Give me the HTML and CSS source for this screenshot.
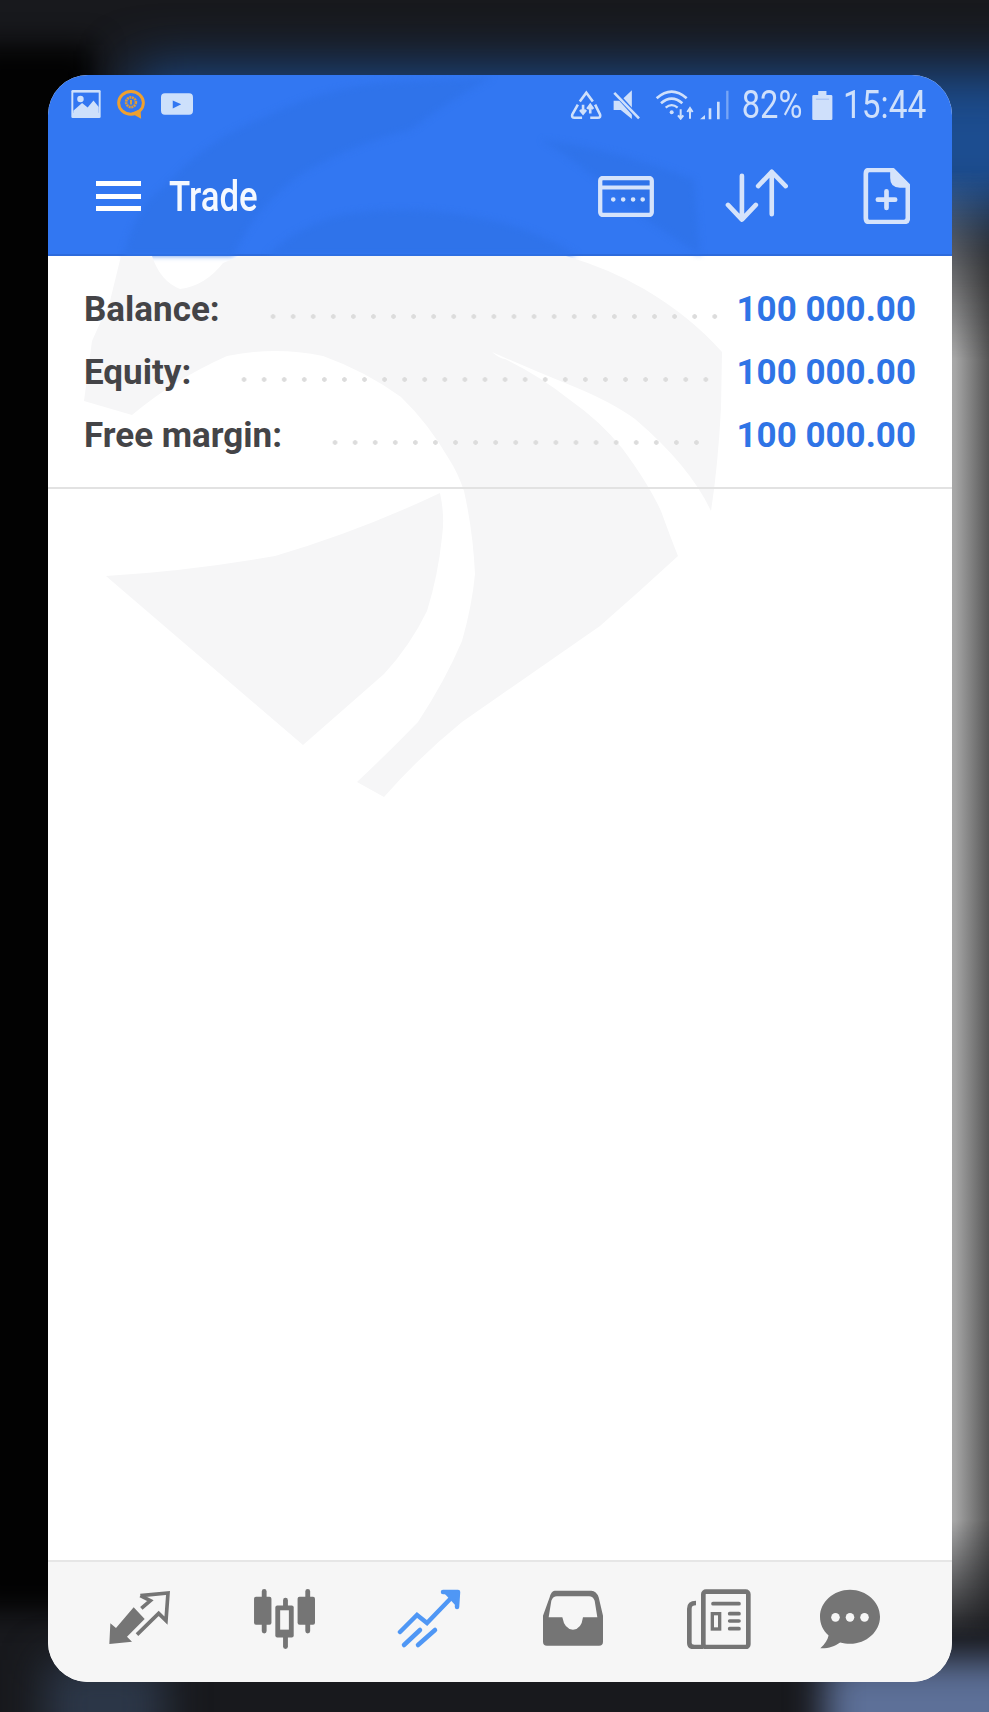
FILE: index.html
```html
<!DOCTYPE html>
<html lang="en">
<head>
    <meta charset="UTF-8">
    <meta name="viewport" content="width=device-width, initial-scale=1.0">
    <title>Trade</title>
    <link rel="stylesheet" href="styles.css">
</head>
<body>
    <!-- blurred wallpaper behind the app window -->
    <div class="backdrop">
        <div class="glow glow-black"></div>
        <div class="glow glow-top"></div>
        <div class="glow glow-side"></div>
        <div class="glow glow-corner"></div>
        <div class="glow glow-foot"></div>
    </div>

    <div class="card">
        <header class="app-header">
            <svg class="header-mark" viewBox="48 75 904 180" aria-hidden="true">
                <path d="M123 257Q136 205 164 187Q205 140 265 117Q320 90 378 83L492 77Q450 100 410 130Q350 145 303 173Q255 205 233 257Z"/>
                <path d="M265 257Q305 220 353 213Q415 205 473 217Q530 225 580 257Z"/>
                <path d="M542 140Q620 150 694 180L700 255L640 215Q590 170 542 140Z"/>
            </svg>

            <div class="status-bar">
                <div class="status-left">
                    <svg class="ico-image" viewBox="92 60 90 86"><rect x="92" y="60" width="90" height="86" rx="4" fill="#cde0fb"/><rect x="98" y="68" width="78" height="62" fill="#3277f2"/><circle cx="120" cy="88" r="10" fill="#cde0fb"/><path d="M98 124L125 100L142 114L160 92L176 112V132H98Z" fill="#cde0fb"/></svg>
                    <svg class="ico-chat" viewBox="226 58 92 88"><ellipse cx="272" cy="97" rx="38" ry="35" fill="none" stroke="#eea02f" stroke-width="9"/><path d="M272 128L303 146L301 116Z" fill="#eea02f"/><circle cx="272" cy="95" r="15" fill="none" stroke="#e09a35" stroke-width="8" stroke-dasharray="6 2"/><rect x="269" y="88" width="6" height="14" fill="#d9a13d"/></svg>
                    <svg class="ico-play" viewBox="360 70 98 66"><rect x="360" y="70" width="98" height="66" rx="12" fill="#cde0fb"/><path d="M396 92L422 104L396 117Z" fill="#3277f2"/></svg>
                </div>
                <div class="status-right">
                    <svg class="ico-recycle" viewBox="208 60 98 92" fill="none" stroke="#cfe0fb" stroke-width="8"><path d="M238 95L258 68L278 95"/><path d="M232 105L215 135Q212 145 222 145H245"/><path d="M285 105L300 135Q303 145 293 145H270"/><path d="M248 105V132M239 121L248 132L257 121"/><path d="M270 132V108M261 118L270 106L279 118"/></svg>
                    <svg class="ico-mute" viewBox="335 60 86 90"><path d="M340 92H362L396 60V148L362 120H340Z" fill="#cfe0fb"/><path d="M340 62L420 150" stroke="#3277f2" stroke-width="15"/><path d="M342 68L418 146" stroke="#cfe0fb" stroke-width="8"/></svg>
                    <svg class="ico-signal" viewBox="450 60 240 90" fill="none" stroke="#cfe0fb"><path d="M470 85Q515 45 560 85" stroke-width="8"/><path d="M483 100Q515 72 547 100" stroke-width="8"/><path d="M497 113Q515 98 533 113" stroke-width="7"/><circle cx="515" cy="127" r="6" fill="#cfe0fb" stroke="none"/><path d="M542 118V146M534 136L542 146L550 136" stroke-width="6"/><path d="M570 146V116M562 126L570 114L578 126" stroke-width="6"/><path d="M600 148L615 135V148Z" fill="#cfe0fb" stroke="none"/><path d="M630 115V148M655 95V148" stroke-width="8"/><path d="M682 62V148" stroke-width="7" opacity=".45"/></svg>
                    <span class="status-text status-battery">82%</span>
                    <svg class="ico-battery" viewBox="937 60 62 88"><path d="M955 60H980V72H994Q998 72 998 76V144Q998 148 994 148H941Q937 148 937 144V76Q937 72 941 72H955Z" fill="#cfe0fb"/><rect x="948" y="83" width="40" height="4" fill="#a9c5f6"/></svg>
                    <span class="status-text status-clock">15:44</span>
                </div>
            </div>

            <div class="toolbar">
                <div class="menu-btn"><span></span><span></span><span></span></div>
                <h1 class="toolbar-title">Trade</h1>
                <div class="toolbar-actions">
                    <svg class="ico-account" viewBox="293 315 168 124" fill="none" stroke="#d5e3fb" stroke-width="13"><rect x="299" y="321" width="156" height="112" rx="8"/><path d="M299 350H455" stroke-width="12"/><path d="M338 386H339M368 386H369M398 386H399M427 386H428" stroke-width="13" stroke-linecap="round"/></svg>
                    <svg class="ico-sort" viewBox="672 296 190 162" fill="none" stroke="#d5e3fb" stroke-width="14" stroke-linecap="round" stroke-linejoin="round"><path d="M723 316V448M681 404L723 448L765 404"/><path d="M813 432V304M772 347L813 304L855 347"/></svg>
                    <svg class="ico-newfile" viewBox="1090 292 140 168" fill="none" stroke="#d5e3fb" stroke-width="14" stroke-linejoin="round"><path d="M1108 298H1178L1224 344V442Q1224 454 1212 454H1108Q1098 454 1098 442V310Q1098 298 1108 298Z"/><path d="M1178 298V322Q1178 344 1200 344H1224" fill="#d5e3fb"/><path d="M1160 362V412M1134 387H1186" stroke-linecap="round"/></svg>
                </div>
            </div>
        </header>

        <main class="app-body">
            <svg class="body-mark" viewBox="48 255 904 1305" aria-hidden="true">
                <path d="M121 255L152 255Q160 280 180 288Q205 285 223 262L240 255H566Q610 268 644 288Q690 315 722 351L721 407Q718 465 711 510Q690 465 635 418Q610 400 570 384Q530 368 492 351Q500 358 505 358Q540 375 570 399Q600 420 622 447Q648 482 661 510Q670 535 678 555Q640 590 600 625L462 721Q420 755 384 796L357 781Q390 750 418 721Q445 680 462 640Q472 605 475 573Q473 530 464 490Q458 472 449 458Q428 422 401 396Q365 370 323 355Q275 345 227 355Q175 378 132 414L84 400L92 340L110 300Z"/>
                <path d="M106 575Q190 570 275 555Q360 530 440 492Q445 515 442 536Q438 575 427 610Q410 645 384 673L303 744Z"/>
            </svg>

            <section class="summary">
                <div class="summary-row">
                    <span class="summary-label">Balance:</span>
                    <span class="dots"></span>
                    <span class="summary-value">100 000.00</span>
                </div>
                <div class="summary-row">
                    <span class="summary-label">Equity:</span>
                    <span class="dots"></span>
                    <span class="summary-value">100 000.00</span>
                </div>
                <div class="summary-row">
                    <span class="summary-label">Free margin:</span>
                    <span class="dots dots-short"></span>
                    <span class="summary-value">100 000.00</span>
                </div>
            </section>
        </main>

        <nav class="tab-bar">
            <svg class="tab tab-first" viewBox="205 155 192 180"><path d="M212 320L215 258L232 272L285 210L318 245L265 298L280 313Z" fill="#757575"/><path d="M305 175L388 167L382 250L360 228L295 292M308 213L335 190L305 175" fill="none" stroke="#757575" stroke-width="11"/></svg>
            <svg class="tab" viewBox="0 0 64 62" fill="#757575"><rect x="8" y="0" width="5" height="46" rx="2.5"/><rect x="0" y="8" width="18" height="29" rx="2"/><rect x="30" y="9" width="5" height="53" rx="2.5"/><rect x="22" y="17" width="19" height="33" rx="2"/><rect x="27" y="22" width="9" height="20" fill="#f6f6f6"/><rect x="53" y="0" width="5" height="46" rx="2.5"/><rect x="45" y="8" width="18" height="29" rx="2"/></svg>
            <svg class="tab" viewBox="0 0 64 60" fill="none" stroke="#4f97f5" stroke-width="4.5" stroke-linecap="round"><path d="M3 43L20 26L30 34L56 7"/><path d="M46 3H61L60 18" fill="#4f97f5" stroke-linejoin="round"/><path d="M7 56L23 41M21 56L38 41"/></svg>
            <svg class="tab" viewBox="125 150 190 180"><path fill-rule="evenodd" fill="#757575" d="M165 155H275Q290 155 297 175L310 230V308Q310 320 298 320H142Q130 320 130 308V230L150 175Q155 155 165 155ZM172 172Q160 172 155 185L147 235H188Q195 272 220 272Q245 272 250 235H293L285 185Q280 172 268 172Z"/></svg>
            <svg class="tab tab-news" viewBox="558 146 192 180" fill="none" stroke="#757575"><rect x="607" y="154" width="135" height="166" rx="8" stroke-width="14"/><path d="M585 188Q565 188 565 205V308Q565 320 580 320H607" stroke-width="14"/><path d="M636 190H714M686 220H714M686 242H714M686 265H714" stroke-width="11" stroke-linecap="round"/><rect x="634" y="220" width="22" height="46" stroke-width="10"/></svg>
            <svg class="tab tab-last" viewBox="955 146 190 182"><path d="M1050 148C1100 148 1141 185 1141 230C1141 275 1100 312 1050 312C1040 312 1030 310 1020 308C1003 320 985 327 960 326C975 312 982 300 985 287C968 272 959 252 959 230C959 185 1000 148 1050 148Z" fill="#757575"/><circle cx="1006" cy="232" r="13" fill="#f6f6f6"/><circle cx="1050" cy="232" r="13" fill="#f6f6f6"/><circle cx="1094" cy="232" r="13" fill="#f6f6f6"/></svg>
        </nav>
    </div>
</body>
</html>
```

FILE: styles.css
```css
html, body {
    height: 100%;
}
body {
    margin: 0;
    height: 1712px;
    overflow: hidden;
    position: relative;
    background-color: #18191d;
    font-family: Roboto, "Liberation Sans", sans-serif;
}

/* wallpaper */
.backdrop {
    position: absolute;
    inset: 0;
    overflow: hidden;
}
.glow {
    position: absolute;
}
.glow-black {
    left: -30px;
    top: 45px;
    width: 125px;
    height: 1565px;
    background-color: #020202;
    filter: blur(14px);
}
.glow-top {
    left: 135px;
    right: -60px;
    top: 70px;
    height: 150px;
    background-color: #1c4d90;
    filter: blur(28px);
}
.glow-side {
    left: 930px;
    width: 59px;
    top: 170px;
    height: 1470px;
    background: linear-gradient(to right, #b4b4b4 0, #a6a6a6 25px, #565656 59px);
    -webkit-mask-image: linear-gradient(to bottom, transparent 0, black 190px, black 1350px, transparent 100%);
    mask-image: linear-gradient(to bottom, transparent 0, black 190px, black 1350px, transparent 100%);
}
.glow-corner {
    left: 825px;
    right: -40px;
    top: 1660px;
    height: 110px;
    background-color: #5d7098;
    filter: blur(18px);
}
.glow-foot {
    left: 45px;
    width: 120px;
    top: 1660px;
    height: 90px;
    background-color: #2c3748;
    filter: blur(20px);
}

/* app window */
.card {
    position: absolute;
    left: 48px;
    top: 75px;
    width: 904px;
    height: 1607px;
    border-radius: 40px;
    overflow: hidden;
    display: flex;
    flex-direction: column;
    background-color: white;
}
.app-header {
    position: relative;
    height: 181px;
    flex: none;
    background-color: #3277f2;
    box-sizing: border-box;
    border-bottom: 2px solid #2d6bdc;
}
.header-mark {
    position: absolute;
    left: 0;
    top: 0;
    width: 904px;
    height: 180px;
    fill: #2f73ea;
    filter: blur(3px);
}

.status-bar {
    position: relative;
    height: 60px;
    display: flex;
    justify-content: space-between;
    align-items: center;
    padding: 0 26px 0 23px;
}
.status-left,
.status-right {
    display: flex;
    align-items: center;
}
.status-left {
    gap: 15px;
    margin-top: -2px;
}
.status-right {
    gap: 10px;
}
.ico-image { width: 30px; height: 28px; }
.ico-chat { width: 30px; height: 29px; }
.ico-play { width: 32px; height: 22px; }
.ico-recycle { width: 32px; height: 30px; }
.ico-mute { width: 28px; height: 30px; }
.ico-signal { width: 80px; height: 30px; }
.ico-battery { width: 21px; height: 29px; }

.status-text {
    display: inline-block;
    font-size: 38px;
    font-weight: 400;
    line-height: 30px;
    color: #cfe0fb;
    white-space: nowrap;
    transform-origin: left center;
    transform: scaleX(0.88);
}
.status-battery {
    width: 62px;
    padding-left: 2px;
    box-sizing: border-box;
    transform: scaleX(0.86);
}
.status-clock {
    width: 83px;
    box-sizing: border-box;
}

.toolbar {
    position: relative;
    height: 119px;
    box-sizing: border-box;
    padding: 3px 42px 0 48px;
    display: flex;
    align-items: center;
}
.menu-btn {
    width: 45px;
    display: flex;
    flex-direction: column;
    gap: 7.5px;
}
.menu-btn span {
    height: 5px;
    background-color: white;
}
.toolbar-title {
    margin: 0 0 0 28px;
    width: 90px;
    font-size: 43px;
    font-weight: 500;
    line-height: 50px;
    color: #f4f8ff;
    white-space: nowrap;
    transform-origin: left center;
    transform: scaleX(0.81);
}
.toolbar-actions {
    margin-left: auto;
    display: flex;
    align-items: center;
}
.ico-account { width: 56px; height: 41px; }
.ico-sort { width: 63px; height: 54px; margin-left: 71px; }
.ico-newfile { width: 47px; height: 56px; margin-left: 75px; }

/* account summary */
.app-body {
    position: relative;
    flex: 1;
}
.body-mark {
    position: absolute;
    left: 0;
    top: 0;
    width: 904px;
    height: 1305px;
    fill: #f6f6f7;
}
.summary {
    position: relative;
    padding: 22px 36px 20px;
    border-bottom: 2px solid #e2e2e2;
}
.summary-row {
    display: flex;
    height: 63px;
    line-height: 63px;
    font-size: 35px;
    font-weight: 700;
}
.summary-label {
    color: #444447;
}
.summary-value {
    color: #2f74e6;
}
.dots {
    flex: 1;
    margin: 0 16px 0 43px;
    background: radial-gradient(circle, #dcdcdc 2px, transparent 2.6px) 0 36px / 20.08px 5px repeat-x;
}
.dots-short {
    margin-right: 30px;
}

/* bottom tabs */
.tab-bar {
    flex: none;
    height: 122px;
    display: flex;
    gap: 80px;
    padding: 27px 0 0 59px;
    box-sizing: border-box;
    background-color: #f6f6f6;
    border-top: 2px solid #e6e6e6;
}
.tab {
    width: 64px;
    height: 60px;
}
.tab-first {
    margin-right: 2px;
}
.tab-news {
    margin-left: 2px;
}
.tab-last {
    margin-left: -13px;
}
```
